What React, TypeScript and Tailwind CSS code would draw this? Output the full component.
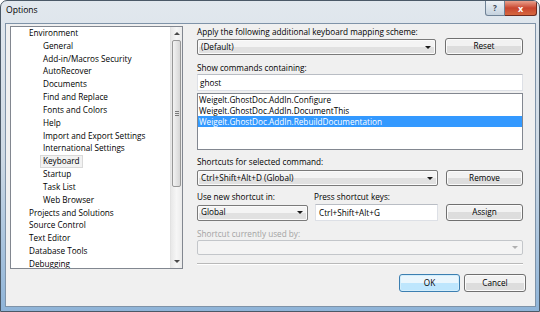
import type { FC, ReactNode } from "react";

const tree: [string, number][] = [
  ["Environment", 0],
  ["General", 1],
  ["Add-in/Macros Security", 1],
  ["AutoRecover", 1],
  ["Documents", 1],
  ["Find and Replace", 1],
  ["Fonts and Colors", 1],
  ["Help", 1],
  ["Import and Export Settings", 1],
  ["International Settings", 1],
  ["Keyboard", 1],
  ["Startup", 1],
  ["Task List", 1],
  ["Web Browser", 1],
  ["Projects and Solutions", 0],
  ["Source Control", 0],
  ["Text Editor", 0],
  ["Database Tools", 0],
  ["Debugging", 0],
];

const commands = [
  "Weigelt.GhostDoc.AddIn.Configure",
  "Weigelt.GhostDoc.AddIn.DocumentThis",
  "Weigelt.GhostDoc.AddIn.RebuildDocumentation",
];

const Arrow: FC<{ up?: boolean; color?: string }> = ({ up, color = "#1a1a1a" }) => (
  <svg width="6" height="3" viewBox="0 0 6 3" className="shrink-0">
    <path d={up ? "M0 3h6L3 0z" : "M0 0h6L3 3z"} fill={color} />
  </svg>
);

const Combo: FC<{ text: string; className?: string }> = ({ text, className }) => (
  <div
    className={`flex items-center justify-between rounded-[2px] border border-[#7a7a7a] bg-linear-to-b from-[#f4f4f4] from-50% to-[#e1e1e1] to-50% pl-[3px] pr-[4px] shadow-[inset_0_0_0_1px_#fbfbfb] ${className}`}
  >
    <span className="whitespace-nowrap">{text}</span>
    <Arrow />
  </div>
);

const Button: FC<{ children: ReactNode; className?: string; primary?: boolean }> = ({
  children,
  className,
  primary,
}) => (
  <div
    className={`flex items-center justify-center rounded-[3px] border ${
      primary
        ? "border-[#3c7fb1] bg-linear-to-b from-[#eaf6fd] from-50% to-[#bee6fd] to-50% shadow-[inset_0_0_0_1px_#d3eefc]"
        : "border-[#707070] bg-linear-to-b from-[#f2f2f2] from-50% to-[#dddddd] to-50% shadow-[inset_0_0_0_1px_#fbfbfb]"
    } ${className}`}
  >
    {children}
  </div>
);

const TreeView: FC = () => (
  <div className="mt-[2px] ml-[4px] flex h-[243px] w-[173px] border border-[#828790] bg-white">
    <div className="flex-1 overflow-hidden">
      {tree.map(([name, level]) => (
        <div
          key={name}
          className={`h-[12.83px] whitespace-nowrap leading-[12.83px] ${level ? "pl-[32px]" : "pl-[18px]"}`}
        >
          {name === "Keyboard" ? (
            <span className="-ml-[3px] inline-block border border-[#d9d9d9] bg-[#f2f2f2] px-[2px] leading-[10.5px]">
              {name}
            </span>
          ) : (
            name
          )}
        </div>
      ))}
    </div>
    <div className="flex w-[12px] flex-col border-l border-[#e2e2e2] bg-linear-to-r from-[#e8e8e8] via-[#f6f6f6] to-[#ebebeb]">
      <div className="flex h-[13px] items-center justify-center">
        <Arrow up color="#4a4a4a" />
      </div>
      <div className="mx-[1px] flex h-[147px] flex-col items-center justify-center gap-[1px] rounded-[2px] border border-[#979797] bg-linear-to-r from-[#f3f3f3] to-[#d6d6d6]">
        <div className="h-px w-[4px] bg-[#7a7a7a]" />
        <div className="h-px w-[4px] bg-[#7a7a7a]" />
        <div className="h-px w-[4px] bg-[#7a7a7a]" />
      </div>
      <div className="flex-1" />
      <div className="flex h-[13px] items-center justify-center">
        <Arrow color="#4a4a4a" />
      </div>
    </div>
  </div>
);

const Label: FC<{ children: ReactNode; className?: string }> = ({ children, className }) => (
  <div className={`h-[13px] whitespace-nowrap leading-[13px] ${className}`}>{children}</div>
);

export default function App() {
  return (
    <div className="relative flex h-[312px] w-[540px] flex-col overflow-hidden rounded-t-[7px] border border-[#4b5967] bg-linear-to-b from-[#e2e8ee] via-[#cdd9e4] to-[#8fb4d8] font-['Open_Sans',sans-serif] text-[8.2px] text-black">
      <div className="flex h-[22px] shrink-0 items-start justify-between">
        <span className="pt-[3px] pl-[5px] text-[8.6px]">Options</span>
        <div className="mr-[2px] flex">
          <div className="flex h-[15px] w-[20px] items-center justify-center rounded-bl-[3px] border border-t-0 border-[#6f8296] bg-linear-to-b from-[#eef2f6] to-[#c5d2de]">
            <span className="text-[8px] font-bold text-[#3a4654]">?</span>
          </div>
          <div className="flex h-[15px] w-[32px] items-center justify-center rounded-br-[3px] border border-t-0 border-l-0 border-[#6e2a1f] bg-linear-to-b from-[#e9a08c] via-[#c8452f] to-[#d6673f]">
            <span className="text-[9px] font-bold leading-none text-white">x</span>
          </div>
        </div>
      </div>

      <div className="mr-[3px] mb-[4px] ml-[4px] flex flex-1 border border-[#7f93a8] bg-[#f0f0f0]">
        <TreeView />

        <div className="ml-[14px] flex w-[329px] flex-col pt-[1px]">
          <Label>Apply the following additional keyboard mapping scheme:</Label>
          <div className="flex h-[17px] items-end justify-between pr-[3px]">
            <Combo text="(Default)" className="h-[16px] w-[239px]" />
            <Button className="h-[17px] w-[78px]">Reset</Button>
          </div>

          <Label className="mt-[6px]">Show commands containing:</Label>
          <div className="mr-[3px] h-[17px] border border-[#dde0e6] border-t-[#b9bdc4] bg-white pl-[2px] leading-[15px]">
            ghost
          </div>
          <div className="mt-[2px] mr-[3px] h-[57px] border border-[#828790] bg-white">
            {commands.map((c, i) => (
              <div
                key={c}
                className={`h-[11px] pl-[1px] leading-[11px] whitespace-nowrap ${
                  i === 2 ? "bg-[#3399ff] text-white" : ""
                }`}
              >
                {c}
              </div>
            ))}
          </div>

          <Label className="mt-[5px]">Shortcuts for selected command:</Label>
          <div className="mt-[2px] flex h-[16px] justify-between pr-[3px]">
            <Combo text="Ctrl+Shift+Alt+D (Global)" className="h-[16px] w-[241px]" />
            <Button className="h-[16px] w-[77px]">Remove</Button>
          </div>

          <div className="mt-[4px] flex">
            <Label className="w-[117px]">Use new shortcut in:</Label>
            <Label>Press shortcut keys:</Label>
          </div>
          <div className="mt-[1px] flex h-[17px] items-center pr-[3px]">
            <Combo text="Global" className="h-[16px] w-[111px]" />
            <div className="ml-[7px] h-[17px] w-[123px] border border-[#dde0e6] border-t-[#b9bdc4] bg-white pl-[3px] leading-[15px]">
              Ctrl+Shift+Alt+G
            </div>
            <Button className="ml-auto h-[17px] w-[77px]">Assign</Button>
          </div>

          <Label className="mt-[6px] text-[#a3a3a3]">Shortcut currently used by:</Label>
          <div className="mr-[3px] flex h-[15px] items-center justify-end rounded-[2px] border border-[#c3c6ca] bg-[#f4f4f4] pr-[4px]">
            <Arrow color="#b0b0b0" />
          </div>

          <div className="mt-[8px] mr-[3px] h-[2px] border-t border-b border-t-[#b9b9b9] border-b-white" />

          <div className="mt-[9px] flex justify-end gap-[4px]">
            <Button primary className="h-[18px] w-[61px]">
              OK
            </Button>
            <Button className="h-[18px] w-[62px]">Cancel</Button>
          </div>
        </div>
      </div>
    </div>
  );
}
